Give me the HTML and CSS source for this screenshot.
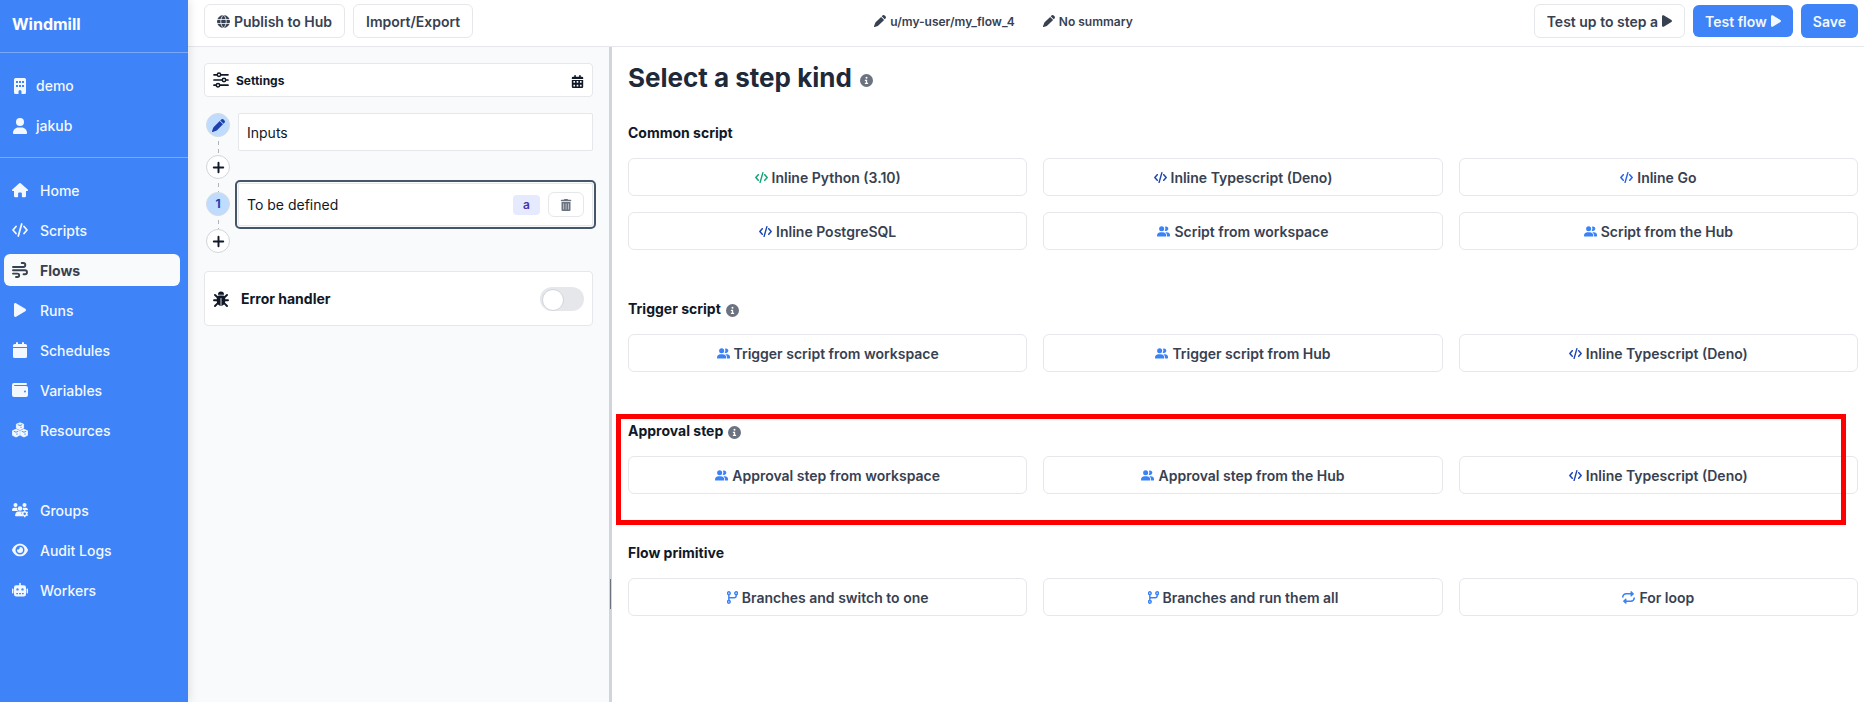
FILE: index.html
```html
<!DOCTYPE html>
<html lang="en">
<head>
<meta charset="utf-8">
<title>Windmill</title>
<link rel="stylesheet" href="styles.css">
</head>
<body>
<svg class="sprite" aria-hidden="true">
  <symbol id="building" viewBox="0 0 16 16"><path fill-rule="evenodd" d="M3.500 0h9A1.500 1.500 0 0 1 14 1.500v13a1.500 1.500 0 0 1-1.500 1.500H9.500v-2.500a1.500 1.500 0 0 0-3 0V16h-3A1.500 1.500 0 0 1 2 14.500v-13A1.500 1.500 0 0 1 3.500 0zM4 3v2h2V3zm3 0v2h2V3zm3 0v2h2V3zM4 7v2h2V7zm3 0v2h2V7zm3 0v2h2V7z"/></symbol>
  <symbol id="user" viewBox="0 0 16 16"><circle cx="8" cy="4" r="4"/><path d="M6.400 9.500h3.200c3 0 5.400 2.400 5.400 5.500 0 .6-.4 1-1 1H2c-.6 0-1-.4-1-1 0-3.100 2.400-5.500 5.400-5.500z"/></symbol>
  <symbol id="home" viewBox="0 0 16 16"><path d="M7.300 1.300a1 1 0 0 1 1.400 0l7 6.100c.7.600.3 1.600-.6 1.600H14v5a1.200 1.200 0 0 1-1.200 1.200H10.500a.6.6 0 0 1-.6-.6v-3.100a1 1 0 0 0-1-1H7.100a1 1 0 0 0-1 1v3.100a.6.6 0 0 1-.6.600H3.200A1.200 1.200 0 0 1 2 14V9H.9C0 9-.4 8 .3 7.400z"/></symbol>
  <symbol id="code" viewBox="0 0 16 16"><path d="M4 4.500 1 8l3 3.500M12 4.500 15 8l-3 3.500M9.700 2 6.300 14" fill="none" stroke="currentColor" stroke-width="1.800" stroke-linecap="round" stroke-linejoin="round"/></symbol>
  <symbol id="wind" viewBox="0 0 16 16"><path d="M9.700 1h1.600a2 2 0 0 1 0 4H1M1 8.300h12a2 2 0 0 1 0 4h-1.500M4 15h1.500a1.700 1.700 0 0 0 0-3.400H1" fill="none" stroke="currentColor" stroke-width="1.900" stroke-linecap="round"/></symbol>
  <symbol id="play" viewBox="0 0 16 16"><path d="M2 2.400C2 1.300 3.100.7 4 1.200l9.300 5.600a1.400 1.400 0 0 1 0 2.400L4 14.800c-.9.500-2-.1-2-1.200z"/></symbol>
  <symbol id="play-narrow" viewBox="2 1 12 14"><path d="M2 2.400C2 1.300 3.100.7 4 1.200l9.300 5.600a1.400 1.400 0 0 1 0 2.400L4 14.800c-.9.500-2-.1-2-1.200z"/></symbol>
  <symbol id="calendar" viewBox="0 0 16 16"><path d="M4 1a1 1 0 0 1 2 0v1h4V1a1 1 0 0 1 2 0v1h1.500A1.500 1.500 0 0 1 15 3.500V5H1V3.500A1.500 1.500 0 0 1 2.500 2H4zM1 6h14v8.500a1.500 1.500 0 0 1-1.500 1.500h-11A1.500 1.500 0 0 1 1 14.500z"/></symbol>
  <symbol id="calendar-days" viewBox="0 0 16 16"><path fill-rule="evenodd" d="M4 1a1 1 0 0 1 2 0v1h4V1a1 1 0 0 1 2 0v1h1.500A1.500 1.500 0 0 1 15 3.500V5H1V3.500A1.500 1.500 0 0 1 2.500 2H4zM1 6h14v8.500a1.500 1.500 0 0 1-1.500 1.500h-11A1.500 1.500 0 0 1 1 14.500zM3 7.500v2h2v-2zm4 0v2h2v-2zm4 0v2h2v-2zM3 12v2h2v-2zm4 0v2h2v-2zm4 0v2h2v-2z"/></symbol>
  <symbol id="wallet" viewBox="0 0 16 16"><path fill-rule="evenodd" d="M2 1h12a1 1 0 0 1 0 2H2.500a.5.500 0 0 0 0 1H14a2 2 0 0 1 2 2v7a2 2 0 0 1-2 2H2a2 2 0 0 1-2-2V3a2 2 0 0 1 2-2zm11 7.500a1 1 0 1 0 0 2 1 1 0 0 0 0-2z"/></symbol>
  <symbol id="cubes" viewBox="0 0 16 16"><path d="m8 .8 3.600 1.400v4L8 7.700 4.400 6.200v-4zM4 7.300l3.600 1.500v4.400L4 15 .4 13.200V8.800zM12 7.300l3.600 1.500v4.400L12 15l-3.600-1.800V8.800z" stroke="currentColor" stroke-width=".8" stroke-linejoin="round"/><path d="m5.800 2.700 2.200.8 2.200-.8M9 6V4.800M1.800 9.300 4 10.200l2.200-.9M5 12.900v-1.500M9.800 9.300l2.200.9 2.200-.9M13 12.900v-1.500" fill="none" stroke="#3e84f8" stroke-width=".9"/></symbol>
  <symbol id="groups" viewBox="0 0 16 16"><circle cx="3.500" cy="3" r="2"/><circle cx="12.500" cy="3" r="2"/><circle cx="8" cy="6.500" r="2.300"/><path d="M1.800 5.800h2.800c.2 0 .5 0 .7.100a3.500 3.500 0 0 0 .7 3H.6A.6.600 0 0 1 0 8.300c0-1.400.8-2.500 1.800-2.500zM11.300 5.800h2.900c1 0 1.800 1 1.800 2.200H10.800c.2-.8.200-1.500-.2-2.100zM6.200 9.600h3.600l-.4 1.700 1.600 3H3.800a.7.700 0 0 1-.7-.7c0-2.200 1.400-4 3.100-4z"/><circle cx="12.700" cy="11.700" r="2" fill="none" stroke="currentColor" stroke-width="1.500"/><path d="M12.700 8.200v1.200M12.700 14v1.200M9.700 10l1 .6M14.700 12.800l1 .6M15.700 10l-1 .6M10.700 12.800l-1 .6" stroke="currentColor" stroke-width="1.400"/></symbol>
  <symbol id="eye" viewBox="0 0 16 16"><path fill-rule="evenodd" d="M8 1.700c3.700 0 6.600 2.400 7.900 5.900.1.300.1.600 0 .8-1.300 3.400-4.200 5.900-7.900 5.900S1.400 11.800.1 8.400a1 1 0 0 1 0-.8C1.400 4.100 4.300 1.700 8 1.700zM8 3.500a4.500 4.500 0 1 0 0 9 4.500 4.500 0 0 0 0-9z"/><path d="M8 5a3 3 0 1 1-3 3v-.6A2 2 0 0 0 7.700 5z"/></symbol>
  <symbol id="robot" viewBox="0 0 16 16"><path fill-rule="evenodd" d="M7.200 1.500a.8.800 0 0 1 1.600 0v1.700h3A2.200 2.200 0 0 1 14 5.400v6.800a2.200 2.200 0 0 1-2.200 2.200H4.200A2.200 2.200 0 0 1 2 12.200V5.400a2.200 2.200 0 0 1 2.200-2.200h3zM5.500 6.200a1.200 1.200 0 1 0 0 2.400 1.200 1.200 0 0 0 0-2.400zm5 0a1.200 1.200 0 1 0 0 2.400 1.200 1.200 0 0 0 0-2.400zM4.300 11v1.200H6V11zm2.800 0v1.200h1.800V11zm2.900 0v1.200h1.700V11z"/><rect y="6.500" width="1.400" height="5" rx=".7"/><rect x="14.600" y="6.500" width="1.400" height="5" rx=".7"/></symbol>
  <symbol id="globe" viewBox="0 0 16 16"><circle cx="8" cy="8" r="8"/><path d="M0 5.500h16M0 10.500h16M8 0C3.500 4 3.500 12 8 16M8 0c4.500 4 4.500 12 0 16" fill="none" stroke="#fff"/></symbol>
  <symbol id="pen" viewBox="0 0 16 16"><path d="m11.300.7.5-.3a2 2 0 0 1 2.500.3l1 1a2 2 0 0 1 .3 2.500l-.3.500-1.100 1.100-4-4zM9.500 2.500l4 4-7.300 7.300c-.3.300-.7.500-1.100.7L.9 16a.7.700 0 0 1-.9-.9l1.500-4.200c.1-.4.400-.8.700-1.100z"/></symbol>
  <symbol id="sliders" viewBox="0 0 16 16"><path d="M1 2.800h3M8 2.800h7M1 8h8M13 8h2M1 13.200h2M7 13.200h8" stroke="currentColor" stroke-width="1.700" stroke-linecap="round"/><g fill="none" stroke="currentColor" stroke-width="1.500"><circle cx="6" cy="2.800" r="1.700"/><circle cx="11" cy="8" r="1.700"/><circle cx="5" cy="13.200" r="1.700"/></g></symbol>
  <symbol id="plus" viewBox="0 0 16 16"><path d="M8 2.200v11.600M2.200 8h11.600" stroke="currentColor" stroke-width="2.400" stroke-linecap="round"/></symbol>
  <symbol id="trash" viewBox="0 0 16 16"><path fill-rule="evenodd" d="M5.200.6A1 1 0 0 1 6.100 0h3.800a1 1 0 0 1 .9.600L11 1h3a1 1 0 0 1 0 2H2a1 1 0 0 1 0-2h3zM2 4h12v10.500a1.500 1.500 0 0 1-1.500 1.500h-9A1.500 1.500 0 0 1 2 14.500zm2.700 2v8h.7V6zm3 0v8h.7V6zm3 0v8h.7V6z"/></symbol>
  <symbol id="bug" viewBox="0 0 16 16"><path d="M5 3.500a3 3 0 0 1 6 0v.3H5z"/><path fill-rule="evenodd" d="M5.500 4.500h5l1.700 1.700v4.300a4.200 4.200 0 0 1-8.400 0V6.200zM7.600 7v7.300h.8V7z"/><path d="m2 4 2.500 2.300M14 4l-2.500 2.300M1 9.300h3.500M11.500 9.300H15M2 15l2.800-2.800M14 15l-2.800-2.800" stroke="currentColor" stroke-width="1.900" stroke-linecap="round" fill="none"/></symbol>
  <symbol id="info" viewBox="0 0 16 16"><path fill-rule="evenodd" d="M8 0a8 8 0 1 1 0 16A8 8 0 0 1 8 0zM8 3.500a1.200 1.200 0 1 0 0 2.400 1.200 1.200 0 0 0 0-2.400zM6 7v1.500h1.200v2.300H6v1.500h4v-1.500H8.800V7z"/></symbol>
  <symbol id="people" viewBox="0 0 16 16"><circle cx="5.700" cy="4.500" r="3.100"/><path d="M4.600 8.800h2.200A4.600 4.600 0 0 1 11.400 13.400a.9.900 0 0 1-.9.900H.9a.9.900 0 0 1-.9-.9 4.600 4.600 0 0 1 4.600-4.600zM9.400 6.900a4.100 4.100 0 0 0 .2-4.700 2.800 2.800 0 1 1-.2 4.700zM10.200 8.800H12a4 4 0 0 1 4 4.300c0 .7-.5 1.200-1.200 1.200h-2.500c.3-2.300-.4-4.200-2.100-5.500z"/></symbol>
  <symbol id="branch" viewBox="1.500 0 13 16"><g fill="none" stroke="currentColor" stroke-width="1.800"><circle cx="3.500" cy="2.700" r="1.700"/><circle cx="3.500" cy="13.300" r="1.700"/><circle cx="12.500" cy="2.700" r="1.700"/><path d="M3.500 4.500v7M12.500 4.500v1.300A2.500 2.500 0 0 1 10 8.300H3.500"/></g></symbol>
  <symbol id="repeat" viewBox="0 0 16 16"><path d="M1 7.500A4 4 0 0 1 5 3.500h6M15 8.500a4 4 0 0 1-4 4H5" fill="none" stroke="currentColor" stroke-width="1.900" stroke-linecap="round"/><path d="M10.500.8c0-.6.700-.9 1.100-.5l2.900 2.700c.3.300.3.700 0 1l-2.900 2.700c-.4.400-1.100.1-1.100-.5zM5.500 15.200c0 .6-.7.900-1.100.5L1.500 13a.7.700 0 0 1 0-1l2.900-2.700c.4-.4 1.100-.1 1.100.5z"/></symbol>
</svg>

<div class="app">
  <nav class="sidebar">
    <div class="brand">Windmill</div>
    <div class="account">
      <a class="nav-link" href="#"><svg class="icon"><use href="#building"/></svg>demo</a>
      <a class="nav-link" href="#"><svg class="icon"><use href="#user"/></svg>jakub</a>
    </div>
    <div class="menu">
      <a class="nav-link" href="#"><svg class="icon"><use href="#home"/></svg>Home</a>
      <a class="nav-link" href="#"><svg class="icon"><use href="#code"/></svg>Scripts</a>
      <a class="nav-link active" href="#"><svg class="icon"><use href="#wind"/></svg>Flows</a>
      <a class="nav-link" href="#"><svg class="icon"><use href="#play"/></svg>Runs</a>
      <a class="nav-link" href="#"><svg class="icon"><use href="#calendar"/></svg>Schedules</a>
      <a class="nav-link" href="#"><svg class="icon"><use href="#wallet"/></svg>Variables</a>
      <a class="nav-link" href="#"><svg class="icon"><use href="#cubes"/></svg>Resources</a>
    </div>
    <div class="menu secondary">
      <a class="nav-link" href="#"><svg class="icon"><use href="#groups"/></svg>Groups</a>
      <a class="nav-link" href="#"><svg class="icon"><use href="#eye"/></svg>Audit Logs</a>
      <a class="nav-link" href="#"><svg class="icon"><use href="#robot"/></svg>Workers</a>
    </div>
  </nav>

  <div class="workspace">
    <header class="topbar">
      <div class="group">
        <button class="btn"><svg class="icon small"><use href="#globe"/></svg>Publish to Hub</button>
        <button class="btn">Import/Export</button>
      </div>
      <div class="titles">
        <button class="title-edit"><svg class="icon tiny"><use href="#pen"/></svg>u/my-user/my_flow_4</button>
        <button class="title-edit"><svg class="icon tiny"><use href="#pen"/></svg>No summary</button>
      </div>
      <div class="group">
        <button class="btn">Test up to step a<svg class="icon narrow"><use href="#play-narrow"/></svg></button>
        <button class="btn primary slim">Test flow<svg class="icon narrow"><use href="#play-narrow"/></svg></button>
        <button class="btn primary">Save</button>
      </div>
    </header>

    <div class="panes">
      <aside class="flow-pane">
        <button class="settings"><svg class="icon"><use href="#sliders"/></svg><span>Settings</span><svg class="icon small end"><use href="#calendar-days"/></svg></button>

        <div class="flow">
          <div class="rail">
            <span class="dot"><svg class="icon small"><use href="#pen"/></svg></span>
            <span class="link"></span>
            <button class="dot add" aria-label="Add step"><svg class="icon small"><use href="#plus"/></svg></button>
            <span class="link short"></span>
            <span class="dot">1</span>
            <span class="link short"></span>
            <button class="dot add" aria-label="Add step"><svg class="icon small"><use href="#plus"/></svg></button>
          </div>
          <div class="steps">
            <div class="step">Inputs</div>
            <div class="step selected">
              <span class="step-name">To be defined</span>
              <span class="badge">a</span>
              <button class="delete" aria-label="Delete step"><svg class="icon tiny"><use href="#trash"/></svg></button>
            </div>
          </div>
        </div>

        <div class="error-card">
          <svg class="icon"><use href="#bug"/></svg>
          <label for="error-handler">Error handler</label>
          <input class="toggle" type="checkbox" id="error-handler">
        </div>
      </aside>

      <div class="splitter"></div>

      <main class="kinds">
        <h1>Select a step kind <svg class="icon info"><use href="#info"/></svg></h1>

        <section class="kind">
          <h2>Common script</h2>
          <div class="options">
            <button class="option"><svg class="icon small green"><use href="#code"/></svg>Inline Python (3.10)</button>
            <button class="option"><svg class="icon small navy"><use href="#code"/></svg>Inline Typescript (Deno)</button>
            <button class="option"><svg class="icon small royal"><use href="#code"/></svg>Inline Go</button>
            <button class="option"><svg class="icon small navy"><use href="#code"/></svg>Inline PostgreSQL</button>
            <button class="option"><svg class="icon small blue"><use href="#people"/></svg>Script from workspace</button>
            <button class="option"><svg class="icon small blue"><use href="#people"/></svg>Script from the Hub</button>
          </div>
        </section>

        <section class="kind">
          <h2>Trigger script <svg class="icon info"><use href="#info"/></svg></h2>
          <div class="options">
            <button class="option"><svg class="icon small blue"><use href="#people"/></svg>Trigger script from workspace</button>
            <button class="option"><svg class="icon small blue"><use href="#people"/></svg>Trigger script from Hub</button>
            <button class="option"><svg class="icon small navy"><use href="#code"/></svg>Inline Typescript (Deno)</button>
          </div>
        </section>

        <section class="kind highlighted">
          <h2>Approval step <svg class="icon info"><use href="#info"/></svg></h2>
          <div class="options">
            <button class="option"><svg class="icon small blue"><use href="#people"/></svg>Approval step from workspace</button>
            <button class="option"><svg class="icon small blue"><use href="#people"/></svg>Approval step from the Hub</button>
            <button class="option"><svg class="icon small navy"><use href="#code"/></svg>Inline Typescript (Deno)</button>
          </div>
        </section>

        <section class="kind">
          <h2>Flow primitive</h2>
          <div class="options">
            <button class="option"><svg class="icon branch blue"><use href="#branch"/></svg>Branches and switch to one</button>
            <button class="option"><svg class="icon branch blue"><use href="#branch"/></svg>Branches and run them all</button>
            <button class="option"><svg class="icon small blue"><use href="#repeat"/></svg>For loop</button>
          </div>
        </section>
      </main>
    </div>
  </div>
</div>
</body>
</html>
```
FILE: styles.css
```css
* { box-sizing: border-box; }

body {
  margin: 0;
  font-family: Inter, "Liberation Sans", sans-serif;
  font-size: 14px;
  line-height: 20px;
  color: #111827;
  background: #fff;
}

button {
  font: inherit;
  color: inherit;
  margin: 0;
  cursor: pointer;
}

h1, h2 { margin: 0; display: flex; align-items: center; }

.sprite { position: absolute; width: 0; height: 0; }

.icon { width: 16px; height: 16px; flex: none; fill: currentColor; }
.icon.small { width: 13px; height: 13px; }
.icon.tiny { width: 12px; height: 12px; }
.icon.narrow { width: 10px; height: 12px; }
.icon.branch { width: 11px; height: 13px; }
.icon.info { width: 13px; height: 13px; color: #6b7280; }
.green { color: #16a377; }
.navy { color: #1e47af; }
.royal { color: #2563eb; }
.blue { color: #3b82f6; }

.app { display: flex; min-height: 100vh; }

/* Sidebar */
.sidebar {
  flex: 0 0 188px;
  z-index: 1;
  background: #3e84f8;
  color: #f3f8ff;
  box-shadow: 0 0 10px rgba(0, 0, 0, 0.15);
}

.brand {
  padding: 14px 12px 18px;
  font-size: 16px;
  font-weight: 700;
  color: #fff;
}

.account {
  display: grid;
  gap: 8px;
  padding: 17px 4px 15px;
  border-top: 1px solid #79a9fa;
  border-bottom: 1px solid #79a9fa;
}

.menu { display: grid; gap: 8px; padding: 16px 8px 0 4px; }
.menu.secondary { padding-top: 48px; }

.nav-link {
  display: flex;
  align-items: center;
  gap: 12px;
  height: 32px;
  padding: 0 8px;
  border-radius: 6px;
  color: inherit;
  font-weight: 500;
  text-decoration: none;
}

.account .nav-link { gap: 8px; }
.menu .nav-link { padding-top: 2px; }
.menu .icon { margin-bottom: 2px; }
.nav-link.active { background: #f9fafb; color: #374151; font-weight: 700; }

/* Top bar */
.workspace { flex: 1; min-width: 0; display: flex; flex-direction: column; }

.topbar {
  display: flex;
  justify-content: space-between;
  align-items: flex-start;
  height: 47px;
  padding: 4px 6px 0 16px;
  border-bottom: 1px solid #e5e7eb;
}

.group { display: flex; align-items: center; gap: 8px; }

.btn {
  display: flex;
  align-items: center;
  gap: 4px;
  height: 34px;
  padding: 2px 12px 0;
  border: 1px solid #e5e7eb;
  border-radius: 6px;
  background: #fff;
  color: #374151;
  font-weight: 600;
  white-space: nowrap;
}

.btn .icon, .option .icon { margin-bottom: 2px; }
.btn.primary { border: 0; background: #3e84f8; color: #f3f8ff; }
.btn.slim { height: 32px; }

.titles { display: flex; gap: 28px; height: 34px; }

.title-edit {
  display: flex;
  align-items: center;
  gap: 4px;
  padding: 2px 0 0;
  border: 0;
  background: none;
  color: #374151;
  font-size: 12px;
  font-weight: 600;
}

.title-edit .icon { margin-bottom: 2px; }

/* Panes */
.panes {
  flex: 1;
  display: grid;
  grid-template-columns: minmax(320px, calc(25% + 2px)) 3px 1fr;
}

.flow-pane { padding: 16px; background: #f9fafb; }

.splitter {
  display: flex;
  align-items: flex-end;
  justify-content: center;
  padding-bottom: 93px;
  background: #d1d5db;
}

/* Drag grip on the pane divider */
.splitter::before { content: ""; width: 1px; height: 30px; background: #6b7280; }

.settings {
  display: flex;
  align-items: center;
  gap: 7px;
  width: 100%;
  height: 34px;
  padding: 2px 8px 0;
  border: 1px solid #e5e7eb;
  border-radius: 4px;
  background: #fff;
  font-size: 12px;
  font-weight: 700;
}

.settings .icon { margin-bottom: 2px; }
.settings .end { margin: 0 0 0 auto; }

.flow { display: flex; gap: 8px; margin: 16px 0 18px; padding-left: 2px; }
.rail { display: flex; flex-direction: column; align-items: center; }

.dot {
  display: flex;
  align-items: center;
  justify-content: center;
  width: 24px;
  height: 24px;
  padding: 0;
  border: 1px solid #d5dbe4;
  border-radius: 50%;
  background: #bfdbfe;
  color: #1e40af;
  font-size: 12px;
  font-weight: 700;
}

.dot.add { border-color: #d1d5db; background: #fff; color: #111827; }

.link {
  width: 1px;
  height: 18px;
  background: repeating-linear-gradient(transparent 0 4px, #b0b3b8 4px 8px);
}

.link.short { height: 13px; }

.steps { flex: 1; display: flex; flex-direction: column; gap: 32px; }

.step {
  display: flex;
  align-items: center;
  height: 38px;
  padding: 2px 8px 0;
  border: 1px solid #e5e7eb;
  border-radius: 2px;
  background: #fff;
}

.step.selected { height: 43px; padding-top: 0; outline: 2px solid #475569; outline-offset: 1px; }
.step-name { flex: 1; }

.badge {
  padding: 0 10px;
  border-radius: 4px;
  background: #e5eaff;
  color: #4338a8;
  font-weight: 600;
  font-size: 12px;
}

.delete {
  display: flex;
  align-items: center;
  justify-content: center;
  width: 36px;
  height: 25px;
  margin-left: 8px;
  padding: 0;
  border: 1px solid #e5e7eb;
  border-radius: 6px;
  background: #fff;
  color: #6b7280;
}

.error-card {
  display: flex;
  align-items: center;
  gap: 12px;
  height: 55px;
  padding: 0 8px;
  border: 1px solid #e5e7eb;
  border-radius: 4px;
  background: #fff;
  font-weight: 700;
}

.toggle {
  appearance: none;
  width: 44px;
  height: 24px;
  margin: 0 0 0 auto;
  padding: 2px;
  border-radius: 12px;
  background: #e5e7eb;
}

.toggle::before {
  content: "";
  display: block;
  width: 20px;
  height: 20px;
  border: 1px solid #d1d5db;
  border-radius: 50%;
  background: #fff;
}

/* Step kinds */
.kinds { padding: 15px 6px 16px 16px; min-width: 0; }

h1 { gap: 8px; margin-bottom: 29px; font-size: 26px; line-height: 32px; font-weight: 700; color: #1f2937; }
h1 .icon { margin-top: 4px; }
h2 { gap: 5px; margin-bottom: 15px; font-size: 14px; font-weight: 700; }
h2 .icon { margin-top: 2px; }

.kind { position: relative; margin-bottom: 49px; }

.highlighted::after {
  content: "";
  position: absolute;
  inset: -7px 12px -31px -12px;
  border: 5px solid #f00;
  pointer-events: none;
}

.options { display: grid; grid-template-columns: repeat(3, minmax(0, 1fr)); gap: 16px; }

.option {
  display: flex;
  align-items: center;
  justify-content: center;
  gap: 4px;
  height: 38px;
  padding: 2px 8px 0;
  border: 1px solid #e5e7eb;
  border-radius: 6px;
  background: #fff;
  color: #374151;
  font-weight: 600;
}
```
